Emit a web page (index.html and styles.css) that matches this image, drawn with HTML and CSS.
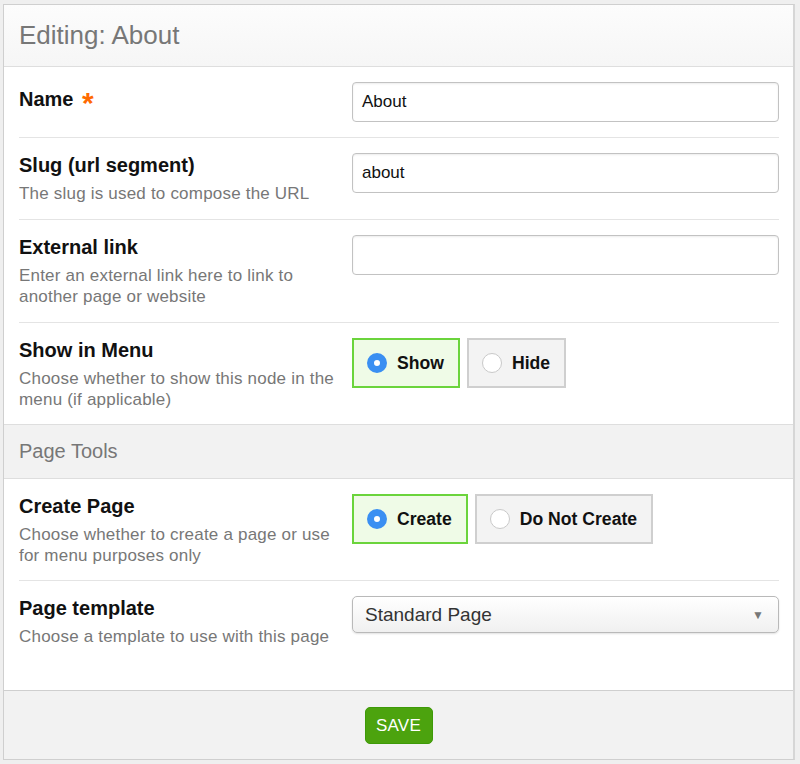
FILE: index.html
```html
<!DOCTYPE html>
<html>
<head>
<meta charset="utf-8">
<link rel="stylesheet" href="styles.css">
</head>
<body>
<div class="page">
  <div class="panel">
    <div class="panel-head">Editing: About</div>
    <div class="panel-body">
      <div class="row row-first">
        <div class="label-col">
          <div class="label">Name <span class="req">*</span></div>
        </div>
        <div class="ctrl-col">
          <div class="input">About</div>
        </div>
      </div>
      <div class="row">
        <div class="label-col">
          <div class="label">Slug (url segment)</div>
          <div class="desc">The slug is used to compose the URL</div>
        </div>
        <div class="ctrl-col">
          <div class="input">about</div>
        </div>
      </div>
      <div class="row">
        <div class="label-col">
          <div class="label">External link</div>
          <div class="desc">Enter an external link here to link to another page or website</div>
        </div>
        <div class="ctrl-col">
          <div class="input"></div>
        </div>
      </div>
      <div class="row row-nosep">
        <div class="label-col">
          <div class="label">Show in Menu</div>
          <div class="desc">Choose whether to show this node in the menu (if applicable)</div>
        </div>
        <div class="ctrl-col">
          <div class="opts">
            <div class="opt opt-on"><span class="radio radio-on"></span>Show</div>
            <div class="opt"><span class="radio"></span>Hide</div>
          </div>
        </div>
      </div>
      <div class="section">Page Tools</div>
      <div class="row row-tight">
        <div class="label-col">
          <div class="label">Create Page</div>
          <div class="desc">Choose whether to create a page or use for menu purposes only</div>
        </div>
        <div class="ctrl-col">
          <div class="opts">
            <div class="opt opt-on"><span class="radio radio-on"></span>Create</div>
            <div class="opt"><span class="radio"></span>Do Not Create</div>
          </div>
        </div>
      </div>
      <div class="row row-last">
        <div class="label-col">
          <div class="label">Page template</div>
          <div class="desc">Choose a template to use with this page</div>
        </div>
        <div class="ctrl-col">
          <div class="select"><span>Standard Page</span><span class="arrow">&#9660;</span></div>
        </div>
      </div>
    </div>
    <div class="panel-foot">
      <button class="save">SAVE</button>
    </div>
  </div>
</div>
</body>
</html>
```
FILE: styles.css
```css
* { box-sizing: border-box; }
html, body { margin: 0; padding: 0; }
body {
  background: #efefef;
  font-family: "Liberation Sans", Arial, sans-serif;
  color: #111;
}
.page {
  padding: 4px 5px 5px 3px;
}
.panel {
  background: #fff;
  border: 1px solid #cfcfcf;
  border-right: 2px solid #d6d6d6;
}
.panel-head {
  height: 62px;
  padding: 0 15px;
  display: flex;
  align-items: center;
  font-size: 26px;
  color: #777;
  background: linear-gradient(#fcfcfc, #f6f6f6);
  border-bottom: 1px solid #dedede;
}
.panel-body {
  padding-bottom: 28px;
}
.row {
  margin: 0 14px 0 15px;
  padding: 15px 0;
  display: grid;
  grid-template-columns: 333px 1fr;
  border-bottom: 1px solid #e4e4e4;
}
.row-first .label {
  padding-top: 5px;
}
.row-nosep {
  border-bottom: none;
  padding-bottom: 14px;
}
.row-tight {
  padding-bottom: 14px;
}
.row-last {
  border-bottom: none;
}
.label {
  font-size: 20px;
  font-weight: bold;
  line-height: 24px;
  color: #111;
}
.req {
  color: #ff6a00;
  font-size: 30px;
  line-height: 18px;
  vertical-align: -7px;
  margin-left: 3px;
}
.desc {
  margin-top: 6px;
  font-size: 17px;
  letter-spacing: 0.2px;
  line-height: 21px;
  color: #777;
  padding-right: 8px;
}
.input {
  height: 40px;
  border: 1px solid #c2c2c2;
  border-radius: 4px;
  box-shadow: inset 0 1px 2px rgba(0,0,0,0.08);
  padding: 0 9px;
  display: flex;
  align-items: center;
  font-size: 17px;
  color: #111;
  background: #fff;
}
.opts {
  display: flex;
  gap: 7px;
}
.opt {
  height: 50px;
  display: flex;
  align-items: center;
  padding: 0 14px 0 13px;
  font-size: 17.6px;
  font-weight: bold;
  color: #111;
  background: #f3f3f3;
  border: 2px solid #cfcfcf;
}
.opt-on {
  background: #effbe7;
  border-color: #6bd43c;
}
.radio {
  width: 20px;
  height: 20px;
  border-radius: 50%;
  border: 1px solid #c9c9c9;
  background: #fff;
  margin-right: 10px;
  flex: none;
}
.radio-on {
  border: 7px solid #3a8ff2;
  background: #fff;
}
.section {
  height: 55px;
  padding: 0 15px;
  display: flex;
  align-items: center;
  font-size: 20px;
  color: #777;
  background: #f2f2f2;
  border-top: 1px solid #dedede;
  border-bottom: 1px solid #dedede;
}
.select {
  height: 37px;
  border: 1px solid #b9b9b9;
  border-radius: 5px;
  background: linear-gradient(#ffffff, #f0f0f0);
  box-shadow: 0 1px 2px rgba(0,0,0,0.12);
  display: flex;
  align-items: center;
  justify-content: space-between;
  padding: 0 14px 0 12px;
  font-size: 19px;
  color: #333;
}
.arrow {
  font-size: 12px;
  color: #777;
}
.panel-foot {
  background: #f2f2f2;
  border-top: 1px solid #cfcfcf;
  padding: 16px 0 15px;
  display: flex;
  justify-content: center;
}
.save {
  width: 68px;
  height: 37px;
  background: #4ca30e;
  color: #fff;
  border: 1px solid #3e9a08;
  border-radius: 5px;
  font-family: "Liberation Sans", Arial, sans-serif;
  font-size: 17px;
  letter-spacing: 0.2px;
  padding: 0;
}
```
